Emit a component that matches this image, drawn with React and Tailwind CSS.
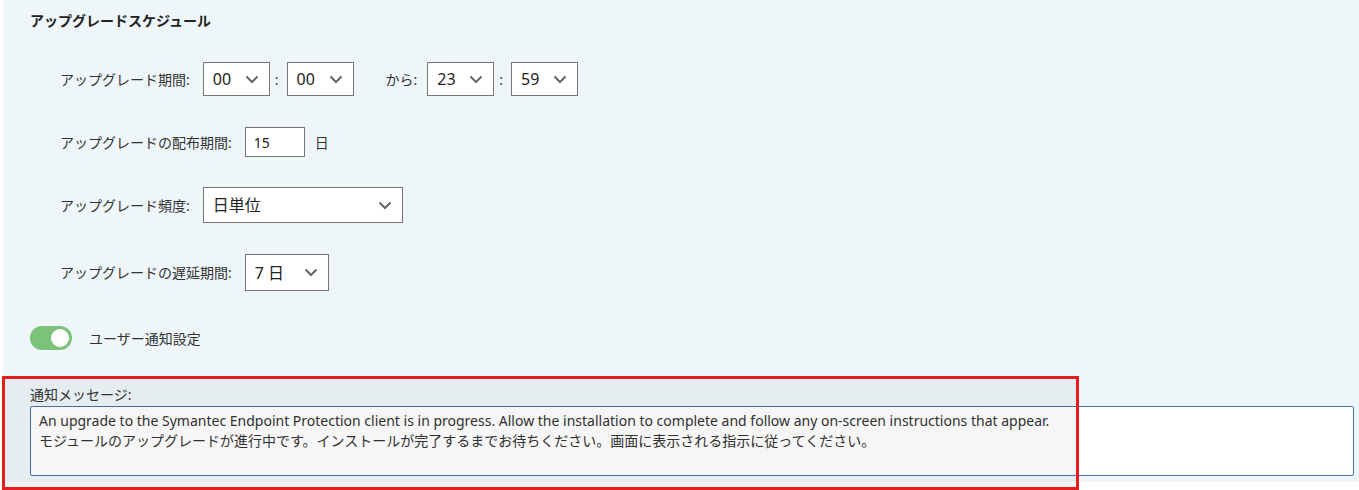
const jp = { fontFamily: '"Noto Sans", "Noto Sans CJK JP", sans-serif' }

function Chevron({ className = '' }) {
  return (
    <svg width="14" height="9" viewBox="0 0 14 9" className={className}>
      <path d="M1.5 1.5 L7 7 L12.5 1.5" fill="none" stroke="#666" strokeWidth="2" />
    </svg>
  )
}

function Select({ value, width, height = 'h-[34px]', text = 'text-[16px]' }) {
  return (
    <div className={`flex items-center justify-between bg-white border border-[#767676] pl-[9px] pr-[10px] ${height} ${text} text-[#222]`} style={{ width }}>
      <span>{value}</span>
      <Chevron />
    </div>
  )
}

function Label({ children }) {
  return <span className="text-[14px] text-[#333] mr-[13px]">{children}</span>
}

export default function App() {
  return (
    <div className="relative min-h-screen bg-white" style={jp}>
      <div className="ml-[3px] h-[482px] bg-[#eef6f9] pl-[27px] pr-[4px] pt-[11px]">
        <h2 className="text-[14px] font-bold leading-[20px] text-[#222]">アップグレードスケジュール</h2>

        {/* schedule rows */}
        <div className="pl-[30px]">
          <div className="mt-[31px] flex items-center h-[34px]">
            <Label>アップグレード期間:</Label>
            <Select value="00" width={67} />
            <span className="ml-[5px] mr-[8px] text-[14px] text-[#333]">:</span>
            <Select value="00" width={67} />
            <span className="ml-[32px] mr-[10px] text-[14px] text-[#333]">から:</span>
            <Select value="23" width={67} />
            <span className="ml-[5px] mr-[8px] text-[14px] text-[#333]">:</span>
            <Select value="59" width={67} />
          </div>

          <div className="mt-[31px] flex items-center h-[30px]">
            <Label>アップグレードの配布期間:</Label>
            <div className="flex items-center w-[60px] h-[30px] bg-white border border-[#767676] px-[8px] text-[14px] text-[#222]">15</div>
            <span className="ml-[10px] text-[14px] text-[#333]">日</span>
          </div>

          <div className="mt-[30px] flex items-center h-[36px]">
            <Label>アップグレード頻度:</Label>
            <Select value="日単位" width={200} height="h-[36px]" />
          </div>

          <div className="mt-[31px] flex items-center h-[37px]">
            <Label>アップグレードの遅延期間:</Label>
            <Select value="7 日" width={84} height="h-[37px]" />
          </div>
        </div>

        {/* toggle */}
        <div className="mt-[35px] flex items-center h-[24px]">
          <div className="relative w-[42px] h-[24px] rounded-full bg-[#7cc27a]">
            <div className="absolute right-[3px] top-[3px] w-[18px] h-[18px] rounded-full bg-white" />
          </div>
          <span className="ml-[17px] text-[14px] text-[#333]">ユーザー通知設定</span>
        </div>

        {/* message */}
        <div className="mt-[35px] text-[14px] leading-[20px] text-[#333]">通知メッセージ:</div>
        <div className="mt-[1px] mr-[1px] h-[70px] bg-white border border-[#4a72b8] rounded-[2px] px-[8px] py-[4px] text-[14px] leading-[20px] text-[#333]">
          <p>An upgrade to the Symantec Endpoint Protection client is in progress. Allow the installation to complete and follow any on-screen instructions that appear.</p>
          <p>モジュールのアップグレードが進行中です。インストールが完了するまでお待ちください。画面に表示される指示に従ってください。</p>
        </div>
      </div>

      {/* highlight annotation */}
      <div className="absolute left-[2px] top-[376px] w-[1077px] h-[114px] border-[3px] border-[#e41e1e] bg-black/[0.035] pointer-events-none" />
    </div>
  )
}
